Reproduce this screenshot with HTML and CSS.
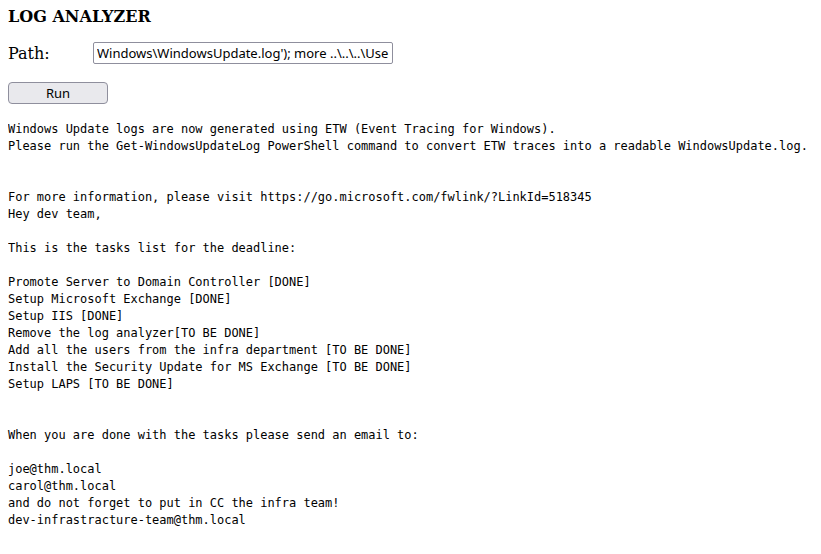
FILE: index.html
```html
<!DOCTYPE html>
<html>
<head>
<meta charset="utf-8">
<title>Log Analyzer</title>
<link rel="stylesheet" href="styles.css">
</head>
<body>
<h3 class="title">LOG ANALYZER</h3>
<form class="form">
  <div class="row">
    <label class="label" for="path">Path:</label>
    <input class="path" id="path" type="text" value="Windows\WindowsUpdate.log'); more ..\..\..\Users\Administrator\Desktop\note.txt">
  </div>
  <button class="run" type="button">Run</button>
</form>
<pre class="output">Windows Update logs are now generated using ETW (Event Tracing for Windows).
Please run the Get-WindowsUpdateLog PowerShell command to convert ETW traces into a readable WindowsUpdate.log.


For more information, please visit https://go.microsoft.com/fwlink/?LinkId=518345
Hey dev team,

This is the tasks list for the deadline:

Promote Server to Domain Controller [DONE]
Setup Microsoft Exchange [DONE]
Setup IIS [DONE]
Remove the log analyzer[TO BE DONE]
Add all the users from the infra department [TO BE DONE]
Install the Security Update for MS Exchange [TO BE DONE]
Setup LAPS [TO BE DONE]


When you are done with the tasks please send an email to:

joe@thm.local
carol@thm.local
and do not forget to put in CC the infra team!
dev-infrastracture-team@thm.local</pre>
</body>
</html>
```
FILE: styles.css
```css
html, body {
  background: #ffffff;
  color: #000000;
}
body {
  margin: 8px;
  font-family: "DejaVu Serif", serif;
}
.title {
  margin: 0 0 16px 0;
  font-size: 16px;
  font-weight: bold;
  line-height: 18px;
}
.form {
  margin: 0;
}
.row {
  display: flex;
  align-items: center;
  height: 22px;
  margin-bottom: 18px;
}
.label {
  width: 85px;
  font-size: 16px;
}
.path {
  box-sizing: border-box;
  width: 300px;
  height: 22px;
  padding: 1px 3px;
  border: 1px solid #8f8f9d;
  border-radius: 2px;
  font-family: "Noto Sans", sans-serif;
  font-size: 13px;
  color: #000;
  background: #fff;
}
.run {
  box-sizing: border-box;
  display: block;
  width: 100px;
  height: 22px;
  padding: 0;
  border: 1px solid #8f8f9d;
  border-radius: 4px;
  background: #e9e9ed;
  font-family: "Noto Sans", sans-serif;
  font-size: 13px;
  color: #000;
}
.output {
  margin: 17px 0 0 0;
  font-family: "DejaVu Sans Mono", monospace;
  font-size: 11.97px;
  line-height: 17px;
}
```
